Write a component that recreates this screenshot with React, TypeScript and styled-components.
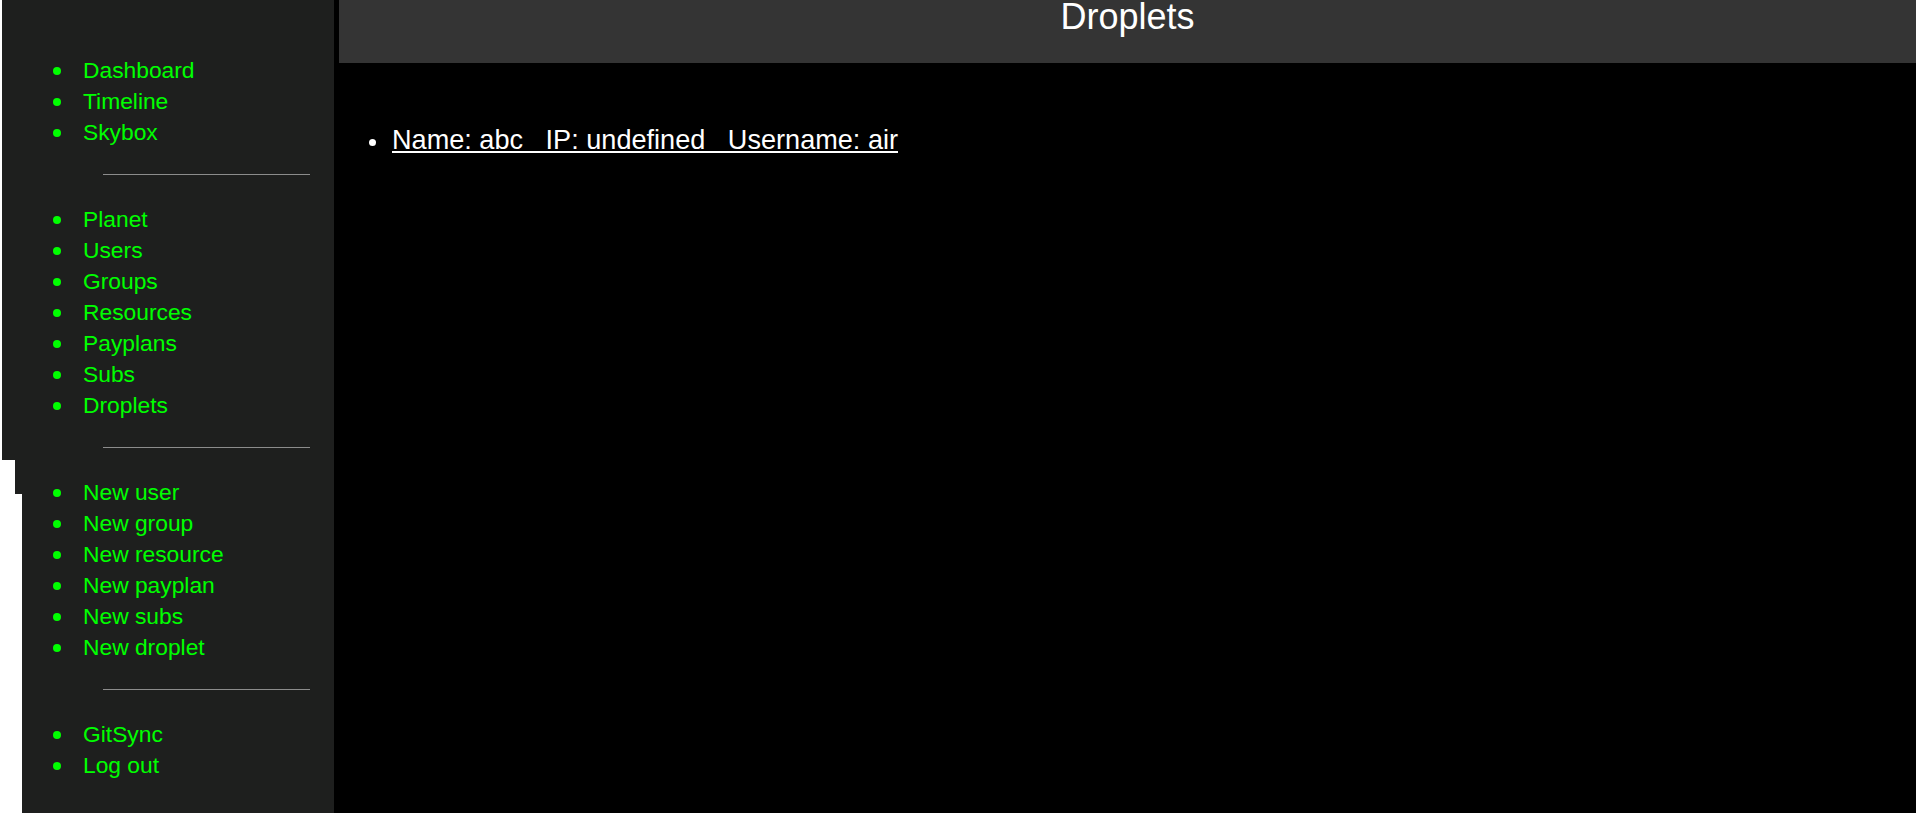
import styled, { createGlobalStyle } from 'styled-components';

const GlobalStyle = createGlobalStyle`
  html, body {
    margin: 0;
    padding: 0;
    background: #ffffff;
    font-family: 'Liberation Sans', Arial, sans-serif;
  }
`;

const StyledPage = styled.div`
  display: flex;
  height: 100vh;
  min-height: 813px;
`;

// sidebar panel, with the two ragged strips sticking out on its left edge
const StyledSidebar = styled.nav`
  position: relative;
  width: 312px;
  margin-left: 22px;
  padding-top: 55px;
  background: #1e1f1e;
  flex-shrink: 0;

  &::before {
    content: '';
    position: absolute;
    left: -20px;
    top: 0;
    width: 20px;
    height: 460px;
    background: #1e1f1e;
  }

  &::after {
    content: '';
    position: absolute;
    left: -7px;
    top: 460px;
    width: 7px;
    height: 34px;
    background: #1e1f1e;
  }
`;

const StyledMenu = styled.ul`
  list-style: none;
  margin: 0;
  padding: 0 0 0 31px;
`;

const StyledMenuItem = styled.li`
  display: flex;
  align-items: flex-start;
  gap: 22px;
  height: 31px;
  line-height: 31px;
  font-size: 22.8px;
`;

const StyledBullet = styled.span<{ $size: number; $top: number; $color: string }>`
  width: ${({ $size }) => $size}px;
  height: ${({ $size }) => $size}px;
  margin-top: ${({ $top }) => $top}px;
  border-radius: 50%;
  background: ${({ $color }) => $color};
  flex-shrink: 0;
`;

const StyledMenuLink = styled.a`
  color: #00ff00;
  text-decoration: none;
  white-space: nowrap;
`;

const StyledDivider = styled.hr`
  width: 207px;
  height: 1px;
  margin: 26px 0 29px 81px;
  border: none;
  background: #8c8c8c;
`;

const StyledMain = styled.main`
  flex: 1;
  display: flex;
  flex-direction: column;
  padding-left: 5px;
  background: #000000;
`;

const StyledHeader = styled.header`
  height: 63px;
  background: #343434;
  text-align: center;
`;

const StyledTitle = styled.h1`
  margin: 0;
  padding-top: 1px;
  font-size: 36px;
  font-weight: normal;
  line-height: 32px;
  color: #ffffff;
`;

const StyledList = styled.ul`
  list-style: none;
  margin: 61px 0 0;
  padding: 0 0 0 30px;
`;

const StyledRow = styled.li`
  display: flex;
  align-items: flex-start;
  gap: 16px;
  line-height: 31px;
  font-size: 27.1px;
`;

const StyledRowLink = styled.a`
  color: #ffffff;
  text-decoration: underline;
  white-space: pre;
`;

const menuGroups: string[][] = [
  ['Dashboard', 'Timeline', 'Skybox'],
  ['Planet', 'Users', 'Groups', 'Resources', 'Payplans', 'Subs', 'Droplets'],
  ['New user', 'New group', 'New resource', 'New payplan', 'New subs', 'New droplet'],
  ['GitSync', 'Log out'],
];

const droplets = [{ name: 'abc', ip: undefined as string | undefined, username: 'air' }];

export default function App() {
  return (
    <>
      <GlobalStyle />
      <StyledPage>
        <StyledSidebar>
          {menuGroups.map((group, i) => (
            <div key={i}>
              {i > 0 && <StyledDivider />}
              <StyledMenu>
                {group.map((label) => (
                  <StyledMenuItem key={label}>
                    <StyledBullet $size={8} $top={12} $color="#00ff00" />
                    <StyledMenuLink href="#">{label}</StyledMenuLink>
                  </StyledMenuItem>
                ))}
              </StyledMenu>
            </div>
          ))}
        </StyledSidebar>
        <StyledMain>
          <StyledHeader>
            <StyledTitle>Droplets</StyledTitle>
          </StyledHeader>
          <StyledList>
            {droplets.map((d) => (
              <StyledRow key={d.name}>
                <StyledBullet $size={7} $top={15} $color="#ffffff" />
                <StyledRowLink href="#">
                  {`Name: ${d.name}   IP: ${String(d.ip)}   Username: ${d.username}`}
                </StyledRowLink>
              </StyledRow>
            ))}
          </StyledList>
        </StyledMain>
      </StyledPage>
    </>
  );
}
